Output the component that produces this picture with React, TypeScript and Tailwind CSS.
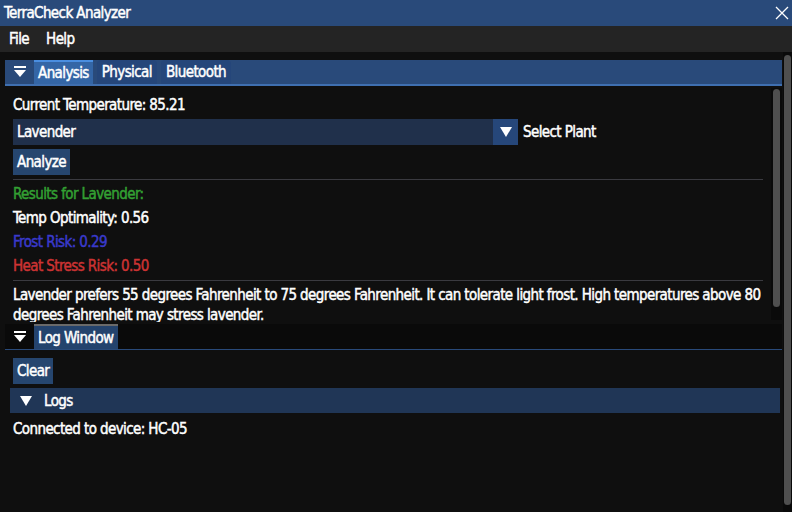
const font = "font-['DejaVu_Sans_Condensed','DejaVu_Sans',sans-serif] font-normal text-[15px] tracking-[-0.6px] [-webkit-text-stroke:0.45px_currentColor]";

const MenuIcon = () => (
  <svg width="14" height="14" viewBox="0 0 14 14" className="shrink-0">
    <rect x="1" y="1" width="12" height="2" fill="#fff" />
    <polygon points="1,5 13,5 7,12" fill="#fff" />
  </svg>
);

const Triangle = () => (
  <svg width="12" height="12" viewBox="0 0 12 12" className="shrink-0">
    <polygon points="0,1 12,1 6,11" fill="#fff" />
  </svg>
);

const Separator = () => <div className="h-px bg-[#3a3a40] mr-[8px]" />;

const App = () => {
  return (
    <div className={`w-[792px] h-[512px] bg-[#0f0f0f] text-white leading-[20px] flex flex-col overflow-hidden ${font}`}>
      {/* title bar */}
      <div className="h-[26px] shrink-0 bg-[#294a7a] flex items-center justify-between pl-[4px] pr-[2px]">
        <span>TerraCheck Analyzer</span>
        <svg width="16" height="16" viewBox="0 0 16 16">
          <path d="M2 2 L14 14 M14 2 L2 14" stroke="#fff" strokeWidth="1.3" />
        </svg>
      </div>
      {/* menu bar */}
      <div className="h-[26px] shrink-0 bg-[#242424] flex items-center gap-[17px] px-[9px]">
        <span>File</span>
        <span>Help</span>
      </div>

      <div className="flex flex-1 min-h-0">
        <div className="flex-1 flex flex-col pt-[8px] pl-[5px] pr-[1px]">
          {/* Analysis panel */}
          <div className="h-[262px] shrink-0 flex flex-col">
            <div className="h-[26px] shrink-0 bg-[#294a7a] border-b-2 border-[#3f6fb0] flex items-stretch">
              <div className="w-[29px] flex items-center justify-center pl-[1px]">
                <MenuIcon />
              </div>
              <div className="flex items-stretch gap-[4px]">
                <div className="bg-[#3466a6] border-t-2 border-[#4a8ee0] px-[4px] flex items-center">Analysis</div>
                <div className="bg-[#25467a] px-[5px] flex items-center rounded-t-sm">Physical</div>
                <div className="bg-[#25467a] px-[5px] flex items-center rounded-t-sm">Bluetooth</div>
              </div>
            </div>
            <div className="flex flex-1 min-h-0">
              <div className="flex-1 pt-[9px] pl-[8px] overflow-hidden space-y-[4px]">
                <div>Current Temperature: 85.21</div>
                <div className="flex items-center h-[26px]">
                  <div className="w-[480px] h-full bg-[#20304b] flex items-center px-[4px]">Lavender</div>
                  <div className="w-[25px] h-full bg-[#26477a] flex items-center justify-center">
                    <Triangle />
                  </div>
                  <span className="ml-[5px]">Select Plant</span>
                </div>
                <div className="h-[26px] flex">
                  <div className="bg-[#26466f] px-[4px] flex items-center">Analyze</div>
                </div>
                <Separator />
                <div className="text-[#33a033]">Results for Lavender:</div>
                <div>Temp Optimality: 0.56</div>
                <div className="text-[#3a3acc]">Frost Risk: 0.29</div>
                <div className="text-[#cc3333]">Heat Stress Risk: 0.50</div>
                <Separator />
                <p>
                  Lavender prefers 55 degrees Fahrenheit to 75 degrees Fahrenheit. It can tolerate light frost. High temperatures above 80 degrees Fahrenheit may stress lavender.
                </p>
              </div>
              <div className="w-[11px] bg-[#0a0a0a] pt-[1px] px-[2px] mt-[2px] mb-[2px]">
                <div className="h-[218px] bg-[#4f4f4f] rounded-full" />
              </div>
            </div>
          </div>

          {/* Log window */}
          <div className="mt-[2px] flex-1 flex flex-col">
            <div className="h-[26px] shrink-0 bg-[#0a0a0a] border-b border-[#294a7a] flex items-stretch">
              <div className="w-[29px] flex items-center justify-center pl-[1px]">
                <MenuIcon />
              </div>
              <div className="bg-[#24436d] border-t-2 border-[#6a6a6a] px-[4px] flex items-center">Log Window</div>
            </div>
            <div className="pt-[8px] pl-[8px] pr-[2px] space-y-[4px]">
              <div className="h-[26px] flex">
                <div className="bg-[#26466f] px-[4px] flex items-center">Clear</div>
              </div>
              <div className="h-[25px] bg-[#203656] -ml-[3px] flex items-center gap-[12px] pl-[10px]">
                <Triangle />
                <span>Logs</span>
              </div>
              <div className="pt-[2px]">Connected to device: HC-05</div>
            </div>
          </div>
        </div>

        {/* outer scrollbar */}
        <div className="w-[9px] bg-[#0a0a0a] pt-[3px] px-[1px]">
          <div className="h-[450px] bg-[#4f4f4f] rounded-full" />
        </div>
      </div>
    </div>
  );
};

export default App;
